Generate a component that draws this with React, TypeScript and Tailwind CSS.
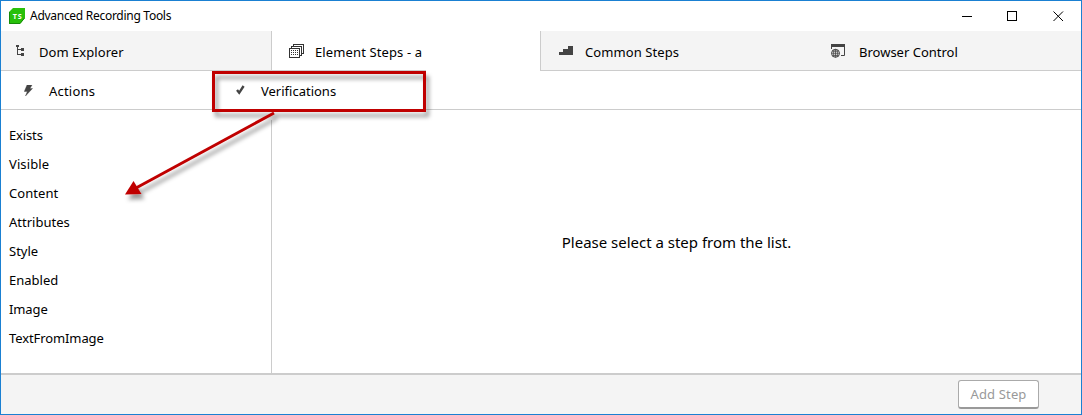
import type { ReactNode } from "react";

type LabelProps = { children: ReactNode; className?: string };

function Label({ children, className = "" }: LabelProps) {
  return <span className={`whitespace-nowrap ${className}`}>{children}</span>;
}

const steps = [
  { name: "Exists", spacing: "tracking-[-0.15px]" },
  { name: "Visible", spacing: "tracking-[0.1px]" },
  { name: "Content", spacing: "tracking-[0.05px]" },
  { name: "Attributes", spacing: "tracking-[0px]" },
  { name: "Style", spacing: "tracking-[0px]" },
  { name: "Enabled", spacing: "tracking-[0px]" },
  { name: "Image", spacing: "tracking-[-0.1px]" },
  { name: "TextFromImage", spacing: "tracking-[-0.1px]" },
];

function Logo() {
  return (
    <svg className="ml-2 h-4 w-4 shrink-0" viewBox="0 0 16 16">
      <path d="M4 0H16V10L11 16H0V4Z" fill="#28c00a" />
      <path d="M.5 4V15.500H11L15.500 10" fill="none" stroke="#168a08" />
      <text x="8.2" y="10.8" textAnchor="middle" fontSize="7.2" fontWeight="700" fill="#fff" fontFamily="Open Sans, sans-serif" textLength="9">TS</text>
    </svg>
  );
}

function TreeIcon() {
  return (
    <svg className="h-3 w-3" viewBox="0 0 12 12" fill="#444" shapeRendering="crispEdges">
      <path d="M0 0h3v2H0zM5 3h3v3H5zM5 8h3v3H5zM1 2h1v8H1zM1 4h4v1H1zM1 9h4v1H1z" />
    </svg>
  );
}

function StackIcon() {
  return (
    <svg className="h-[14px] w-[15px]" viewBox="0 0 15 14" fill="none" stroke="#333" shapeRendering="crispEdges">
      <path d="M.5 4.5h10v9h-10zM2.500 4V2.500h10v9H11M4.500 2V.5h10v9H13" />
      <path d="M2 6.500h8M2 8.500h8M2 10.500h8" strokeDasharray="1 1" />
    </svg>
  );
}

function StairsIcon() {
  return (
    <svg className="h-[10px] w-[14px]" viewBox="0 0 14 10" fill="#444" shapeRendering="crispEdges">
      <path d="M0 6h4V3h5V0h5v9H0z" />
    </svg>
  );
}

function BrowserIcon() {
  return (
    <svg className="h-[14px] w-[15px]" viewBox="0 0 15 14" fill="none" stroke="#444">
      <path d="M.5 5V.5h13v11H10" />
      <path d="M0 1.500h14" strokeWidth="3" />
      <circle cx="4.500" cy="9.300" r="4" fill="#f4f4f4" />
      <path d="M4.500 5v8.500M.5 9.300h8M1.500 7.200h6M1.500 11.400h6M3 5.800q-1 3.500 0 7M6 5.800q1 3.500 0 7" strokeWidth=".8" />
    </svg>
  );
}

function BoltIcon() {
  return (
    <svg className="h-[11px] w-[9px]" viewBox="0 0 9 11" fill="#444">
      <path d="M3 0H8L6 3.500H8.500L1.500 11L3.300 6.500H.3Z" stroke="#444" strokeWidth=".4" />
    </svg>
  );
}

function CheckIcon() {
  return (
    <svg className="h-[10px] w-[9px]" viewBox="0 0 9 10" fill="none" stroke="#444" strokeWidth="2.400">
      <path d="M1 5L3.200 7.800L7.600 1" />
    </svg>
  );
}

function Callout() {
  return (
    <svg className="pointer-events-none absolute -left-px -top-px h-[415px] w-[1082px]" viewBox="0 0 1082 415">
      <defs>
        <filter id="shadow" x="-20%" y="-20%" width="140%" height="150%">
          <feDropShadow dx="3" dy="5" stdDeviation="2" floodColor="#000" floodOpacity=".4" />
        </filter>
      </defs>
      <g filter="url(#shadow)">
        <rect x="213.500" y="72.500" width="211" height="38" fill="none" stroke="#c00000" strokeWidth="3" />
      </g>
      <g filter="url(#shadow)">
        <path d="M274 113L136 188" stroke="#c00000" strokeWidth="3" />
        <path d="M125 194.500L133.500 181L141.500 194Z" fill="#c00000" />
      </g>
    </svg>
  );
}

export default function App() {
  return (
    <div className="relative flex h-[415px] w-[1082px] flex-col overflow-hidden border border-[#1a80d2] bg-white font-['Noto_Sans',sans-serif] text-[13px] text-black">
      <header className="flex h-[30px] shrink-0 items-center">
        <Logo />
        <Label className="ml-[5px] text-[12px] tracking-[-0.28px]">Advanced Recording Tools</Label>
        <div className="ml-auto flex items-center pr-[17px]">
          <svg className="mr-[34px] h-[11px] w-[11px]" viewBox="0 0 11 11" stroke="#000" shapeRendering="crispEdges"><path d="M0 5.500h10" /></svg>
          <svg className="mr-[35px] h-[11px] w-[11px]" viewBox="0 0 11 11" fill="none" stroke="#000" shapeRendering="crispEdges"><path d="M.5 .5h9v9h-9z" /></svg>
          <svg className="h-[11px] w-[11px]" viewBox="0 0 11 11" stroke="#000"><path d="M.5 .5l9.500 9.500M10 .5l-9.500 9.500" /></svg>
        </div>
      </header>

      <nav className="flex h-10 shrink-0 bg-[#f4f4f4]">
        <div className="flex w-[270px] items-center border-b border-[#ccc] pl-[15px]">
          <TreeIcon /><Label className="ml-[11px] pt-[4px] tracking-[0.05px]">Dom Explorer</Label>
        </div>
        <div className="flex w-[270px] flex-col border-x border-[#ccc] bg-white">
          <div className="flex h-[39px] items-center pl-[17px]">
            <StackIcon /><Label className="ml-[11px] pt-[4px] tracking-[0.12px]">Element Steps - a</Label>
          </div>
          <div className="h-px w-[154px] bg-[#ccc]" />
        </div>
        <div className="flex w-[271px] items-center border-b border-[#ccc] pl-[18px]">
          <StairsIcon /><Label className="ml-[12px] pt-[4px] tracking-[0.08px]">Common Steps</Label>
        </div>
        <div className="flex flex-1 items-center border-b border-[#ccc] pl-[19px]">
          <BrowserIcon /><Label className="ml-[13px] pt-[4px]">Browser Control</Label>
        </div>
      </nav>

      <nav className="flex h-[39px] shrink-0 items-center border-b border-[#ccc]">
        <div className="flex w-[212px] items-center pl-[23px]">
          <BoltIcon /><Label className="ml-[16px] pt-[3px] tracking-[0.2px]">Actions</Label>
        </div>
        <div className="flex items-center pl-[23px]">
          <CheckIcon /><Label className="ml-[16px] pt-[3px]">Verifications</Label>
        </div>
      </nav>

      <main className="flex h-[263px] shrink-0">
        <ul className="w-[270px] pl-2 pt-[11px]">
          {steps.map((step) => (
            <li key={step.name} className="flex h-[29px] items-center"><Label className={step.spacing}>{step.name}</Label></li>
          ))}
        </ul>
        <div className="mt-[10px] w-px bg-[#ccc]" />
        <section className="flex flex-1 items-center justify-center">
          <Label className="pt-px text-[15px] tracking-[-0.01px]">Please select a step from the list.</Label>
        </section>
      </main>

      <footer className="flex flex-1 items-center justify-end border-t-2 border-[#ccc] bg-[#f4f4f4] pr-[42px]">
        <button className="flex h-[29px] w-[81px] items-center justify-center rounded-[3px] border border-b-2 border-[#aaa] border-b-[#999] bg-white text-[#999]">
          <Label className="pt-px tracking-[0.15px]">Add Step</Label>
        </button>
      </footer>
      <Callout />
    </div>
  );
}
